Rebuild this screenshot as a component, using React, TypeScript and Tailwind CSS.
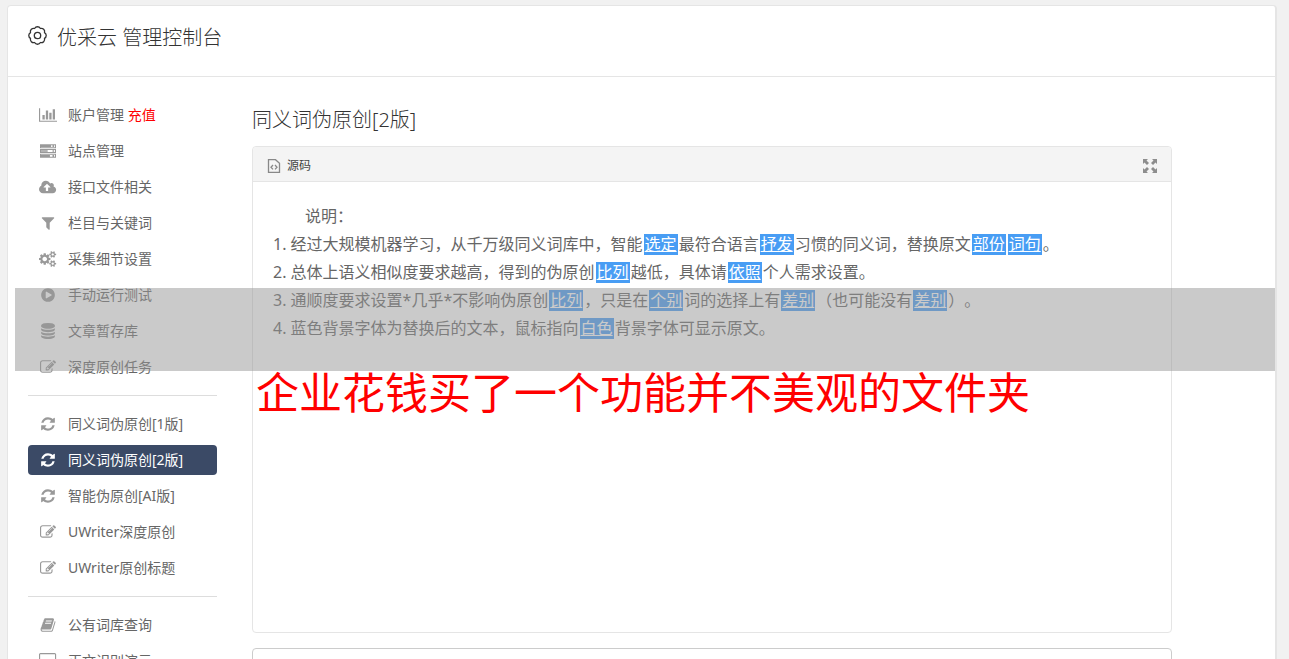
import { useState } from "react";
import type { ReactNode } from "react";

type MenuItem = {
  id: string;
  label: string;
  icon: keyof typeof icons;
  extra?: string;
};

// [viewBox width, path], every icon is 1792 units high
const icons = {
  chart: [2048, "M640 896v512h-256v-512h256zm384-512v1024h-256v-1024h256zm1024 1152v128h-2048v-1536h128v1408h1920zm-640-896v768h-256v-768h256zm384-384v1152h-256v-1152h256z"],
  server: [1792, "M0 128h1792v448h-1792zM112 240v224h1568v-224zM0 672h1792v448h-1792zM112 784v224h1568v-224zM0 1216h1792v448h-1792zM112 1328v224h1568v-224zM112 260h1130v184h-1130zM112 804h750v184h-750zM112 1348h1000v184h-1000zM1400 260h180v184h-180zM1400 804h180v184h-180zM1400 1348h180v184h-180z"],
  upload: [1920, "M1280 928q0-14-9-23l-352-352q-9-9-23-9t-23 9l-351 351q-10 12-10 24 0 14 9 23t23 9h224v352q0 13 9.5 22.5t22.5 9.5h192q13 0 22.5-9.5t9.5-22.5v-352h224q13 0 22.5-9.5t9.5-22.5zm640 288q0 159-112.5 271.5t-271.5 112.5h-1088q-185 0-316.5-131.5t-131.5-316.5q0-130 70-240t188-165q-2-30-2-43 0-212 150-362t362-150q156 0 285.5 87t188.5 231q71-62 166-62 106 0 181 75t75 181q0 76-41 138 130 31 213.5 135.5t83.5 238.5z"],
  filter: [1792, "M1595 295q17 41-14 70l-493 493v742q0 42-39 59-13 5-25 5-27 0-45-19l-256-256q-19-19-19-45v-486l-493-493q-31-29-14-70 17-39 59-39h1280q42 0 59 39z"],
  cogs: [1920, "M896 896q0-106-75-181t-181-75-181 75-75 181 75 181 181 75 181-75 75-181zm768 512q0-52-38-90t-90-38-90 38-38 90q0 53 37.5 90.5t90.5 37.5 90.5-37.5 37.5-90.5zm0-1024q0-52-38-90t-90-38-90 38-38 90q0 53 37.5 90.5t90.5 37.5 90.5-37.5 37.5-90.5zm-384 421v185q0 10-7 19.5t-16 10.5l-155 24q-11 35-32 76 34 48 90 115 7 11 7 20 0 12-7 19-23 30-82.5 89.5t-78.5 59.5q-11 0-21-7l-115-90q-37 19-77 31-11 108-23 155-7 24-30 24h-186q-11 0-20-7.5t-10-17.5l-23-153q-34-10-75-31l-118 89q-7 7-20 7-11 0-21-8-144-133-144-160 0-9 7-19 10-14 41-53t47-61q-23-44-35-82l-152-24q-10-1-17-9.5t-7-19.5v-185q0-10 7-19.5t16-10.5l155-24q11-35 32-76-34-48-90-115-7-11-7-20 0-12 7-20 22-30 82-89t79-59q11 0 21 7l115 90q34-18 77-32 11-108 23-154 7-24 30-24h186q11 0 20 7.5t10 17.5l23 153q34 10 75 31l118-89q8-7 20-7 11 0 21 8 144 133 144 160 0 8-7 19-12 16-42 54t-45 60q23 48 34 82l152 23q10 2 17 10.5t7 19.5zm640 533v140q0 16-149 31-12 27-30 52 51 113 51 138 0 4-4 7-122 71-124 71-8 0-46-47t-52-68q-20 2-30 2t-30-2q-14 21-52 68t-46 47q-2 0-124-71-4-3-4-7 0-25 51-138-18-25-30-52-149-15-149-31v-140q0-16 149-31 13-29 30-52-51-113-51-138 0-4 4-7 4-2 35-20t59-34 30-16q8 0 46 46.5t52 67.5q20-2 30-2t30 2q51-71 92-112l6-2q4 0 124 70 4 3 4 7 0 25-51 138 17 23 30 52 149 15 149 31zm0-1024v140q0 16-149 31-12 27-30 52 51 113 51 138 0 4-4 7-122 71-124 71-8 0-46-47t-52-68q-20 2-30 2t-30-2q-14 21-52 68t-46 47q-2 0-124-71-4-3-4-7 0-25 51-138-18-25-30-52-149-15-149-31v-140q0-16 149-31 13-29 30-52-51-113-51-138 0-4 4-7 4-2 35-20t59-34 30-16q8 0 46 46.5t52 67.5q20-2 30-2t30 2q51-71 92-112l6-2q4 0 124 70 4 3 4 7 0 25-51 138 17 23 30 52 149 15 149 31z"],
  play: [1792, "M896 128q209 0 385.5 103t279.5 279.5 103 385.5-103 385.5-279.5 279.5-385.5 103-385.5-103-279.5-279.5-103-385.5 103-385.5 279.5-279.5 385.5-103zm384 823q32-18 32-55t-32-55l-544-320q-31-19-64-1-32 19-32 56v640q0 37 32 56 16 8 32 8 17 0 32-9z"],
  database: [1792, "M896 768q237 0 443-43t325-127v170q0 69-103 128t-280 93.5-385 34.5-385-34.5-280-93.5-103-128v-170q119 84 325 127t443 43zm0 768q237 0 443-43t325-127v170q0 69-103 128t-280 93.5-385 34.5-385-34.5-280-93.5-103-128v-170q119 84 325 127t443 43zm0-384q237 0 443-43t325-127v170q0 69-103 128t-280 93.5-385 34.5-385-34.5-280-93.5-103-128v-170q119 84 325 127t443 43zm0-1152q208 0 385 34.5t280 93.5 103 128v128q0 69-103 128t-280 93.5-385 34.5-385-34.5-280-93.5-103-128v-128q0-69 103-128t280-93.5 385-34.5z"],
  edit: [1792, "M888 1184l116-116-152-152-116 116v56h96v96h56zm440-720q-16-16-33 1l-350 350q-17 17-1 33t33-1l350-350q17-17 1-33zm80 594v190q0 119-84.5 203.5t-203.5 84.5h-832q-119 0-203.5-84.5t-84.5-203.5v-832q0-119 84.5-203.5t203.5-84.5h832q63 0 117 25 15 7 18 23 3 17-9 29l-49 49q-14 14-32 8-23-6-45-6h-832q-66 0-113 47t-47 113v832q0 66 47 113t113 47h832q66 0 113-47t47-113v-126q0-13 9-22l64-64q15-15 35-7t20 29zm-96-738l288 288-672 672h-288v-288zm444 132l-92 92-288-288 92-92q28-28 68-28t68 28l152 152q28 28 28 68t-28 68z"],
  refresh: [1792, "M1639 1056q0 5-1 7-64 268-268 434.5t-478 166.5q-146 0-282.5-55t-243.5-157l-129 129q-19 19-45 19t-45-19-19-45v-448q0-26 19-45t45-19h448q26 0 45 19t19 45-19 45l-137 137q71 66 161 102t187 36q134 0 250-65t186-179q11-17 53-117 8-23 30-23h192q13 0 22.5 9.5t9.5 22.5zm25-800v448q0 26-19 45t-45 19h-448q-26 0-45-19t-19-45 19-45l138-138q-148-137-349-137-134 0-250 65t-186 179q-11 17-53 117-8 23-30 23h-199q-13 0-22.5-9.5t-9.5-22.5v-7q65-268 270-434.5t480-166.5q146 0 284 55.5t245 156.5l130-129q19-19 45-19t45 19 19 45z"],
  book: [1792, "M1703 478q40 57 18 129l-275 906q-19 64-76.5 107.5t-122.5 43.5h-923q-77 0-148.5-53.5t-99.5-131.5q-24-67-2-127 0-4 3-27t4-37q1-8-3-21.5t-3-19.5q2-11 8-21t16.5-23.5 16.5-23.5q23-38 45-91.5t30-91.5q3-10 .5-30t-.5-28q3-11 17-28t17-23q21-36 42-92t25-90q1-9-2.5-32t.5-28q4-13 22-30.5t22-22.5q19-26 42.5-84.5t27.5-96.5q1-8-3-25.5t-2-26.5q2-8 9-18t18-23 17-21q8-12 16.5-30.5t15-35 16-36 19.5-32 26.5-23.5 36-11.5 47.5 5.5l-1 3q38-9 51-9h761q74 0 114 56t18 130l-274 906q-36 119-71.5 153.5t-128.5 34.5h-869q-27 0-38 15-11 16-1 43 24 70 144 70h923q29 0 56-15.5t35-41.5l300-987q7-22 5-57 38 15 59 43zm-1064 2q-4 13 2 22.5t20 9.5h608q13 0 25.5-9.5t16.5-22.5l21-64q4-13-2-22.5t-20-9.5h-608q-13 0-25.5 9.5t-16.5 22.5zm-83 256q-4 13 2 22.5t20 9.5h608q13 0 25.5-9.5t16.5-22.5l21-64q4-13-2-22.5t-20-9.5h-608q-13 0-25.5 9.5t-16.5 22.5z"],
  desktop: [1920, "M1792 992v-832q0-13-9.5-22.5t-22.5-9.5h-1600q-13 0-22.500 9.500t-9.500 22.500v832q0 13 9.500 22.500t22.500 9.500h1600q13 0 22.500-9.500t9.500-22.500zm128-832v1088q0 66-47 113t-113 47h-544q0 37 16 77.500t32 71 16 43.500q0 26-19 45t-45 19h-512q-26 0-45-19t-19-45q0-14 16-44t32-70 16-78h-544q-66 0-113-47t-47-113v-1088q0-66 47-113t113-47h1600q66 0 113 47t47 113z"],
} as const;

const menuGroups: MenuItem[][] = [
  [
    { id: "account", label: "账户管理", icon: "chart", extra: "充值" },
    { id: "sites", label: "站点管理", icon: "server" },
    { id: "api", label: "接口文件相关", icon: "upload" },
    { id: "keywords", label: "栏目与关键词", icon: "filter" },
    { id: "collect", label: "采集细节设置", icon: "cogs" },
    { id: "run", label: "手动运行测试", icon: "play" },
    { id: "drafts", label: "文章暂存库", icon: "database" },
    { id: "tasks", label: "深度原创任务", icon: "edit" },
  ],
  [
    { id: "syn1", label: "同义词伪原创[1版]", icon: "refresh" },
    { id: "syn2", label: "同义词伪原创[2版]", icon: "refresh" },
    { id: "ai", label: "智能伪原创[AI版]", icon: "refresh" },
    { id: "uwriter", label: "UWriter深度原创", icon: "edit" },
    { id: "title", label: "UWriter原创标题", icon: "edit" },
  ],
  [
    { id: "words", label: "公有词库查询", icon: "book" },
    { id: "detect", label: "正文识别演示", icon: "desktop" },
  ],
];

function Icon({ name }: { name: keyof typeof icons }) {
  const [width, path] = icons[name];
  return (
    <span className="flex w-5 shrink-0 justify-center">
      <svg className="h-4 w-auto" viewBox={`0 0 ${width} 1792`} fill="currentColor" fillRule={name === "server" ? "evenodd" : "nonzero"} aria-hidden="true">
        <path d={path} />
      </svg>
    </span>
  );
}

function GearIcon() {
  return (
    <svg className="size-5" viewBox="0 0 20 20" fill="none" stroke="currentColor" strokeWidth="1.3" strokeLinejoin="round" aria-hidden="true">
      <path d="M16.500 12.400a3.300 3.300 0 0 1-4.100 4.100 3.300 3.300 0 0 1-5.800 0 3.300 3.300 0 0 1-4.100-4.100 3.300 3.300 0 0 1 0-5.800 3.300 3.300 0 0 1 4.100-4.100 3.300 3.300 0 0 1 5.800 0 3.300 3.300 0 0 1 4.100 4.100 3.300 3.300 0 0 1 0 5.800z" />
      <circle cx="9.500" cy="9.500" r="3.200" />
    </svg>
  );
}

// replaced word
function Word({ children }: { children: ReactNode }) {
  return (
    <span className="mx-px inline-block bg-[#489df4] px-px leading-[21px] text-white underline">
      {children}
    </span>
  );
}

export default function App() {
  const [active, setActive] = useState("syn2");

  return (
    <div className="relative h-screen overflow-hidden bg-[#f1f1f1] pt-[5px] pr-3 pl-[7px] font-['Noto_Sans','Noto_Sans_CJK_SC',sans-serif] text-sm text-[#666] [text-spacing-trim:space-all]">
      <div className="min-h-screen rounded-t border border-r-2 border-[#e5e5e5] bg-white">
        <header className="flex h-[71px] items-start gap-[9px] border-b border-[#e5e5e5] px-5 pt-4 text-[#333]">
          <span className="flex h-7 items-center">
            <GearIcon />
          </span>
          <h1 className="text-xl leading-8 font-light">优采云 管理控制台</h1>
        </header>

        <div className="flex gap-[35px] px-5 pt-[23px]">
          <nav className="w-[189px] shrink-0">
            {menuGroups.map((group, i) => (
              <ul
                key={i}
                className={`space-y-[6px] ${i > 0 ? "mt-[13px] border-t border-[#ddd] pt-[13px]" : ""}`}
              >
                {group.map((item) => (
                  <li key={item.id}>
                    <a
                      href={`#${item.id}`}
                      onClick={() => setActive(item.id)}
                      className={`flex h-[30px] items-center gap-[10px] rounded px-[10px] ${
                        active === item.id ? "bg-[#3b4a66] text-white" : "hover:bg-gray-100"
                      }`}
                    >
                      <span className={active === item.id ? "text-white" : "text-[#999]"}>
                        <Icon name={item.icon} />
                      </span>
                      <span>
                        {item.label}
                        {item.extra && <span className="text-[#f00]"> {item.extra}</span>}
                      </span>
                    </a>
                  </li>
                ))}
              </ul>
            ))}
          </nav>

          <main className="max-w-[920px] min-w-0 flex-1 pt-1">
            <h2 className="text-xl leading-8 font-light text-[#333]">同义词伪原创[2版]</h2>

            <section className="mt-[10px] rounded border border-[#e5e5e5]">
              <div className="flex h-[35px] items-center justify-between rounded-t border-b border-[#e5e5e5] bg-[#f4f4f4] px-[14px] pt-[3px]">
                <button type="button" className="flex items-center gap-[6px] text-xs text-[#444]">
                  <svg className="size-[14px] text-[#888]" viewBox="0 0 14 14" fill="none" stroke="currentColor" strokeWidth="1.3" aria-hidden="true">
                    <path d="M1.500.7h7l4 3.600v9h-11z" />
                    <path d="M6 6L4 8.200l2 2.200M8 6l2 2.200-2 2.200" />
                  </svg>
                  源码
                </button>
                <button type="button" aria-label="最大化">
                  <svg className="size-[14px] text-[#8d8d8d]" viewBox="0 0 14 14" fill="currentColor" aria-hidden="true">
                    <path d="M0 0h5L3.500 1.500 6 4 4 6 1.500 3.500 0 5zM14 0v5l-1.500-1.500L10 6 8 4l2.500-2.500L9 0zM0 14V9l1.500 1.500L4 8l2 2-2.500 2.500L5 14zM14 14H9l1.500-1.500L8 10l2-2 2.500 2.500L14 9z" />
                  </svg>
                </button>
              </div>

              <div className="min-h-[450px] p-5 text-base leading-7">
                <p className="indent-8">说明：</p>
                <p>1. 经过大规模机器学习，从千万级同义词库中，智能<Word>选定</Word>最符合语言<Word>抒发</Word>习惯的同义词，替换原文<Word>部份</Word><Word>词句</Word>。</p>
                <p>2. 总体上语义相似度要求越高，得到的伪原创<Word>比列</Word>越低，具体请<Word>依照</Word>个人需求设置。</p>
                <p>3. 通顺度要求设置*几乎*不影响伪原创<Word>比列</Word>，只是在<Word>个别</Word>词的选择上有<Word>差别</Word>（也可能没有<Word>差别</Word>）。</p>
                <p>4. 蓝色背景字体为替换后的文本，鼠标指向<Word>白色</Word>背景字体可显示原文。</p>
              </div>
            </section>

            <textarea
              aria-label="原文"
              className="mt-[15px] block h-40 w-full resize-none rounded border border-[#ccc] p-5"
            />
          </main>
        </div>
      </div>

      {/* caption laid over the page */}
      <div className="pointer-events-none absolute top-72 right-[14px] left-[15px]">
        <div className="h-[83px] bg-[#959595]/50" />
        <p className="pl-[241px] text-[43px] leading-[43px] text-[#f00]">企业花钱买了一个功能并不美观的文件夹</p>
      </div>
    </div>
  );
}
